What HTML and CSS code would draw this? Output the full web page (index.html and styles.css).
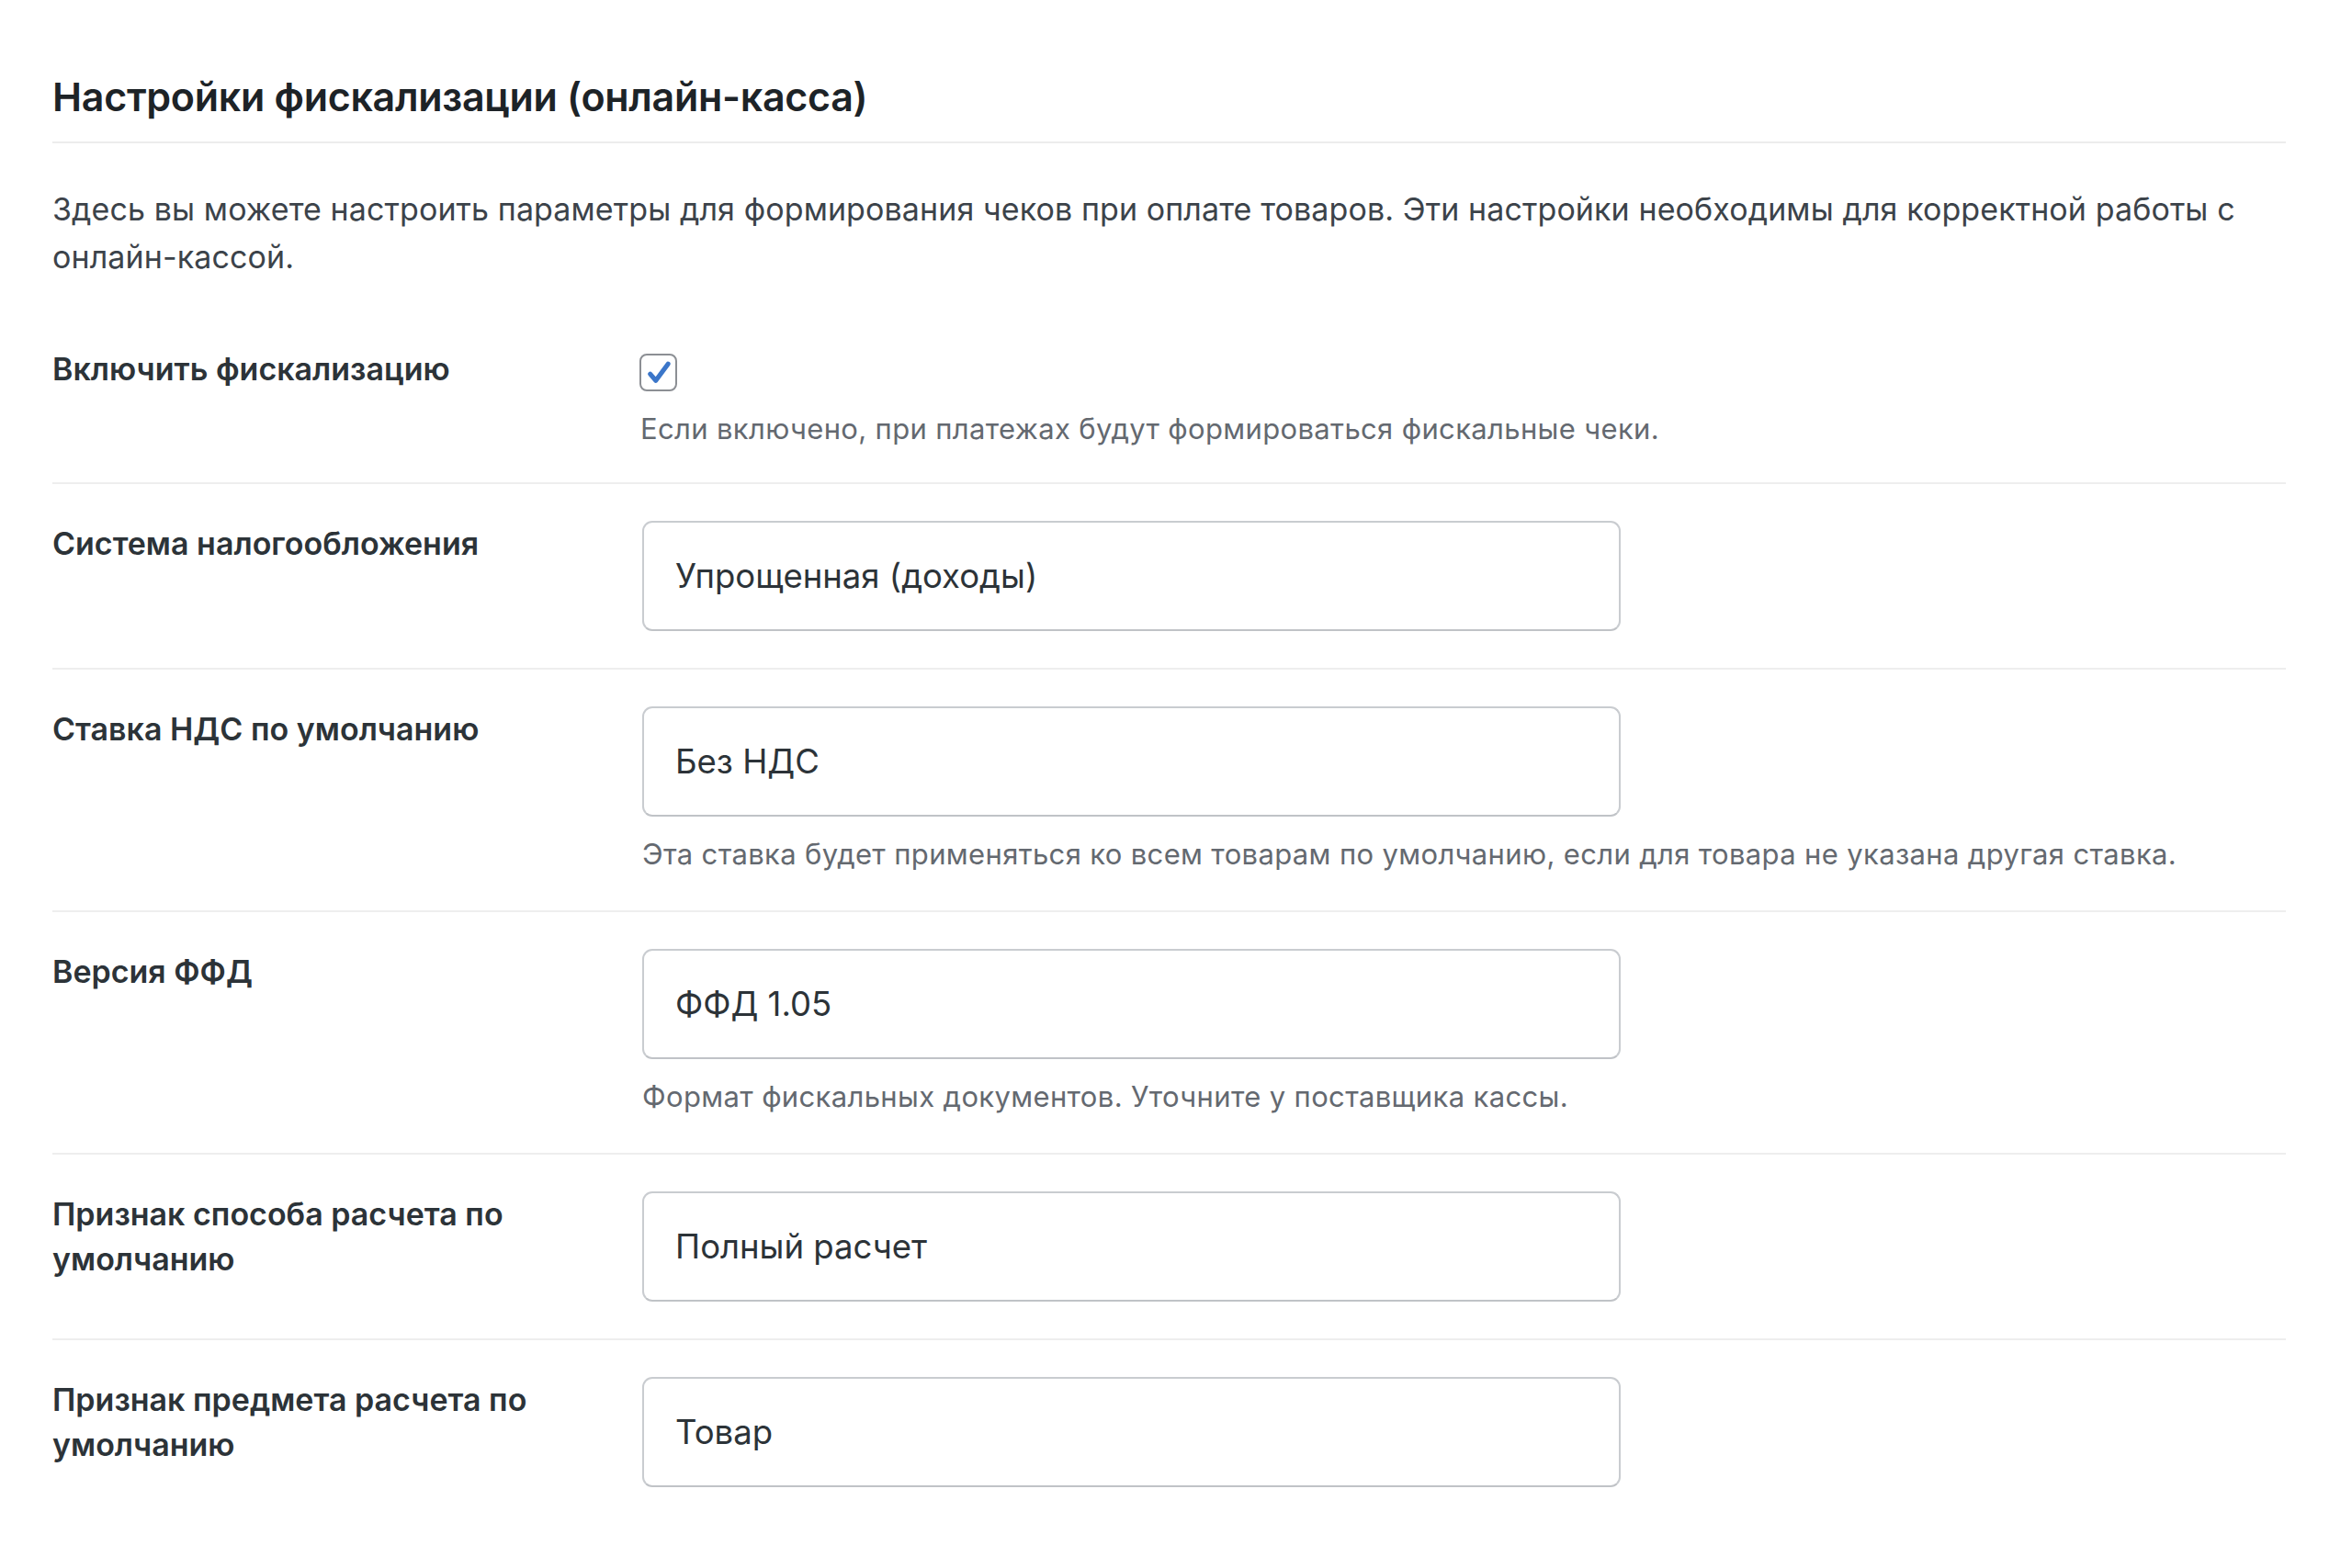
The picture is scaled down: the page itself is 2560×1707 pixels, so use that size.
FILE: index.html
```html
<!DOCTYPE html>
<html lang="ru">
<head>
<meta charset="utf-8">
<title>Настройки фискализации</title>
<link rel="stylesheet" href="styles.css">
</head>
<body>
<div class="wrap">
  <h2 class="title">Настройки фискализации (онлайн-касса)</h2>
  <p class="intro">Здесь вы можете настроить параметры для формирования чеков при оплате товаров. Эти настройки необходимы для корректной работы с <span class="nowrap">онлайн-кассой.</span></p>

  <div class="form">
    <div class="row row-first">
      <div class="label">Включить фискализацию</div>
      <div class="field">
        <span class="checkbox">
          <svg viewBox="0 0 24 24" width="32" height="32"><path d="M5 12.8 L9.6 18.2 L19.6 4.6" fill="none" stroke="#3b76c9" stroke-width="3.8" stroke-linecap="round" stroke-linejoin="round"/></svg>
        </span>
        <p class="hint hint-check">Если включено, при платежах будут формироваться фискальные чеки.</p>
      </div>
    </div>

    <div class="row">
      <div class="label">Система налогообложения</div>
      <div class="field">
        <div class="select">Упрощенная (доходы)</div>
      </div>
    </div>

    <div class="row">
      <div class="label">Ставка НДС по умолчанию</div>
      <div class="field">
        <div class="select">Без НДС</div>
        <p class="hint">Эта ставка будет применяться ко всем товарам по умолчанию, если для товара не указана другая ставка.</p>
      </div>
    </div>

    <div class="row">
      <div class="label">Версия ФФД</div>
      <div class="field">
        <div class="select">ФФД 1.05</div>
        <p class="hint">Формат фискальных документов. Уточните у поставщика кассы.</p>
      </div>
    </div>

    <div class="row">
      <div class="label">Признак способа расчета по умолчанию</div>
      <div class="field">
        <div class="select">Полный расчет</div>
      </div>
    </div>

    <div class="row row-last">
      <div class="label">Признак предмета расчета по умолчанию</div>
      <div class="field">
        <div class="select">Товар</div>
      </div>
    </div>
  </div>
</div>
</body>
</html>
```

FILE: styles.css
```css
html, body {
  margin: 0;
  padding: 0;
  background: #ffffff;
}

body {
  font-family: "Inter", "Noto Sans", sans-serif;
  color: #2c3338;
}

.wrap {
  padding: 0 72px 0 57px;
}

.title {
  margin: 0;
  padding-top: 76px;
  padding-bottom: 20px;
  font-size: 43px;
  line-height: 58px;
  font-weight: 600;
  color: #1d2327;
  border-bottom: 2px solid #ececec;
  letter-spacing: -0.3px;
}

.intro {
  margin: 46px 0 0 0;
  font-size: 34px;
  line-height: 52px;
  color: #3c434a;
  letter-spacing: 0.1px;
}

.nowrap {
  white-space: nowrap;
}

.form {
  margin-top: 36px;
}

.row {
  display: flex;
  padding: 40px 0 40px 0;
  border-bottom: 2px solid #eeeeee;
}

.row-first {
  padding-top: 38px;
  padding-bottom: 36px;
}

.row-first .label {
  margin-top: -3px;
}

.row-last {
  border-bottom: none;
}

.label {
  width: 600px;
  flex: 0 0 600px;
  margin-right: 42px;
  font-size: 34px;
  line-height: 49px;
  font-weight: 600;
  color: #2c3338;
}

.field {
  flex: 1;
  display: flex;
  flex-direction: column;
  align-items: flex-start;
}

.checkbox {
  box-sizing: border-box;
  width: 41px;
  height: 41px;
  margin-top: 5px;
  margin-left: -3px;
  border: 2.5px solid #8c8f94;
  border-radius: 8px;
  background: #fff;
  display: flex;
  align-items: center;
  justify-content: center;
}

.select {
  box-sizing: border-box;
  width: 1065px;
  height: 120px;
  padding: 0 34px;
  border: 2px solid #c9ccd0;
  border-bottom-color: #c0c3c7;
  border-radius: 11px;
  background: #fff;
  display: flex;
  align-items: center;
  font-size: 36.5px;
  color: #2c3338;
}

.hint {
  margin: 20px 0 0 0;
  font-size: 31px;
  line-height: 42px;
  color: #646970;
  letter-spacing: 0.35px;
}

.hint-check {
  margin-top: 19px;
  margin-left: -2px;
  line-height: 44px;
}
```
